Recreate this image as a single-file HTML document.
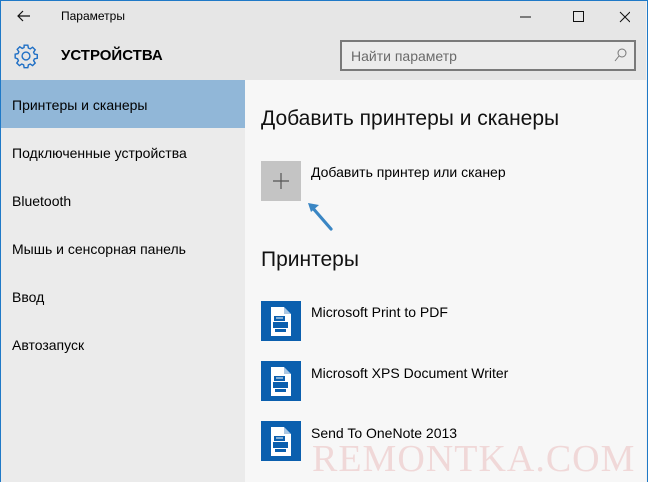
<!DOCTYPE html>
<html><head><meta charset="utf-8"><style>
*{margin:0;padding:0;box-sizing:border-box}
body{width:648px;height:482px;overflow:hidden;font-family:"Liberation Sans","Noto Sans CJK SC",sans-serif;position:relative;background:#f2f2f2}
.win{position:absolute;left:0;top:0;width:648px;height:482px;border:1px solid #1f79c7;border-bottom:none}
.hdr{position:absolute;left:0;top:0;width:646px;height:80px;background:#e6e6e6}
.side{position:absolute;left:0;top:80px;width:245px;height:402px;background:#ebebeb}
.main{position:absolute;left:245px;top:80px;width:401px;height:402px;background:#f7f7f7}
.t{position:absolute;white-space:nowrap;color:#000}
.sel{position:absolute;left:0;top:80px;width:245px;height:48px;background:#91b7d8}
.si{font-size:14px;left:12px}
.pico{position:absolute;width:40px;height:40px;background:#0b5fae}
.mi{font-size:14px;left:311px}
</style></head><body>
<div class="hdr"></div>
<div class="side"></div>
<div class="main"></div>
<div class="sel"></div>
<div class="win"></div>
<svg style="position:absolute;left:17px;top:10px" width="14" height="12" viewBox="0 0 14 12"><path d="M13 6H1M6 1L1 6l5 5" fill="none" stroke="#111" stroke-width="1.2"/></svg>
<div class="t" style="left:61px;top:9px;font-size:12px">Параметры</div>
<svg style="position:absolute;left:520px;top:10px" width="110" height="14"><path d="M0 7h11" stroke="#111"/><rect x="53.5" y="1.5" width="10" height="10" fill="none" stroke="#111"/><path d="M100 2l10 10M110 2l-10 10" stroke="#111"/></svg>
<svg style="position:absolute;left:13px;top:43px" width="26" height="26" viewBox="0 0 24 24"><path fill="none" stroke="#1f6fc5" stroke-width="1.3" d="M10.3 2h3.4l.5 2.6 1.7.8 2.2-1.5 2.4 2.4-1.5 2.2.8 1.7 2.6.5v3.4l-2.6.5-.8 1.7 1.5 2.2-2.4 2.4-2.2-1.5-1.7.8-.5 2.6h-3.4l-.5-2.6-1.7-.8-2.2 1.5-2.4-2.4 1.5-2.2-.8-1.7L2 13.7v-3.4l2.6-.5.8-1.7-1.5-2.2 2.4-2.4 2.2 1.5 1.7-.8z"/><circle cx="12" cy="12" r="3.6" fill="none" stroke="#1f6fc5" stroke-width="1.3"/></svg>
<div class="t" style="left:61px;top:47px;font-size:15px;font-weight:bold">УСТРОЙСТВА</div>
<div style="position:absolute;left:340px;top:40px;width:296px;height:31px;border:2px solid #7a7a7a;background:#ececec"></div>
<div class="t" style="left:351px;top:48px;font-size:14px;color:#6a6a6a">Найти параметр</div>
<svg style="position:absolute;left:614px;top:48px" width="13" height="14"><circle cx="8" cy="5" r="4" fill="none" stroke="#777"/><path d="M5 8L1 13" stroke="#777"/></svg>
<div class="t si" style="top:97px">Принтеры и сканеры</div>
<div class="t si" style="top:145px">Подключенные устройства</div>
<div class="t si" style="top:193px">Bluetooth</div>
<div class="t si" style="top:241px">Мышь и сенсорная панель</div>
<div class="t si" style="top:289px">Ввод</div>
<div class="t si" style="top:337px">Автозапуск</div>
<div class="t" style="left:261px;top:107px;font-size:21px;color:#111">Добавить принтеры и сканеры</div>
<div style="position:absolute;left:261px;top:161px;width:40px;height:40px;background:#c4c4c4"></div>
<svg style="position:absolute;left:261px;top:161px" width="40" height="40"><path d="M20 12v16M12 20h16" stroke="#555" stroke-width="1.2"/></svg>
<div class="t" style="left:311px;top:164px;font-size:14px">Добавить принтер или сканер</div>
<svg style="position:absolute;left:305px;top:200px" width="30" height="32"><path d="M26 29L6 6" stroke="#3a86c4" stroke-width="3.2" stroke-linecap="round"/><path d="M3 3l11 2-8 7z" fill="#3a86c4"/></svg>
<div class="t" style="left:261px;top:248px;font-size:21px;color:#111">Принтеры</div>
<div class="pico" style="left:261px;top:301px"></div>
<div class="pico" style="left:261px;top:361px"></div>
<div class="pico" style="left:261px;top:421px"></div>
<svg style="position:absolute;left:261px;top:301px" width="40" height="160">
<defs><g id="p"><path d="M10 6h13l7 7v22H10z" fill="#fff"/><path d="M23 6v7h7" fill="#0b5fae" opacity=".35"/><rect x="13" y="15" width="11" height="5" fill="#0b5fae"/><rect x="15" y="16.5" width="7" height="1" fill="#fff"/><rect x="12" y="21" width="15" height="6" fill="#0b5fae"/><rect x="14" y="28" width="11" height="3" fill="#0b5fae"/></g></defs>
<use href="#p"/><use href="#p" y="60"/><use href="#p" y="120"/></svg>
<div class="t mi" style="left:311px;top:304px">Microsoft Print to PDF</div>
<div class="t mi" style="left:311px;top:365px">Microsoft XPS Document Writer</div>
<div class="t mi" style="left:311px;top:425px">Send To OneNote 2013</div>
<div class="t" style="left:312px;top:437px;font-family:'Liberation Serif',serif;font-size:38px;color:rgba(230,170,170,.4);letter-spacing:1px">REMONTKA.COM</div>
</body></html>
